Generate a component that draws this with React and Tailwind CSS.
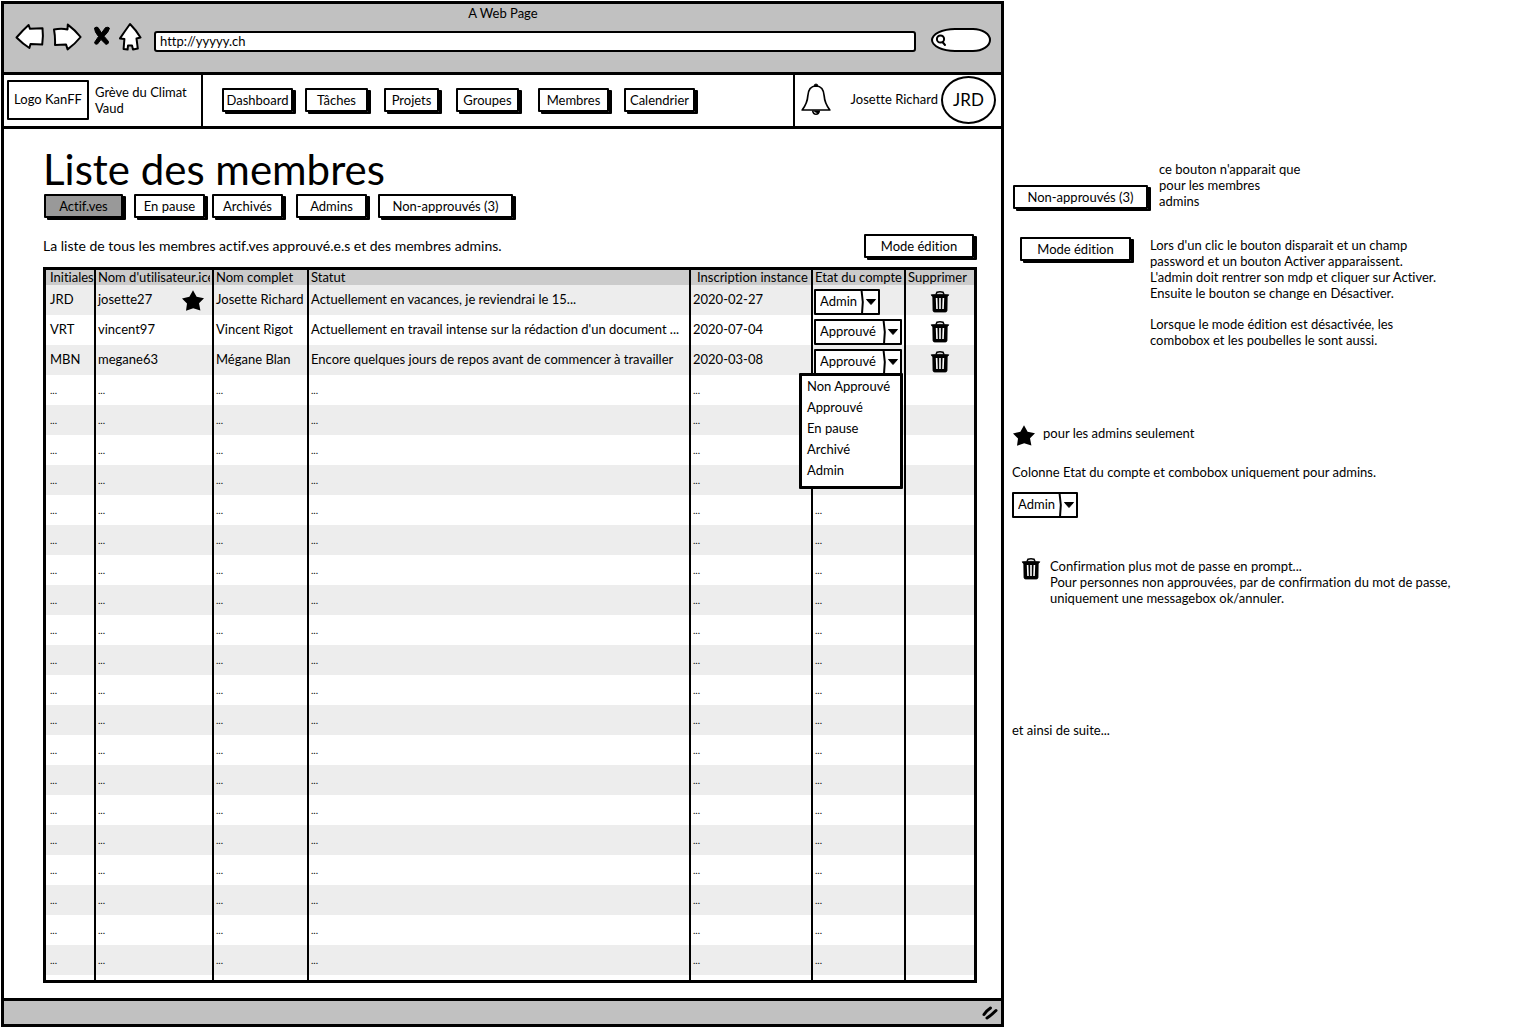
import React from "react";

function SketchButton({ children, className = "" }) {
  return (
    <button
      type="button"
      className={`h-6 shrink-0 whitespace-nowrap rounded-[1px] border-2 border-black text-center leading-5 shadow-[3px_2px_0_#000] ${className}`}
    >
      {children}
    </button>
  );
}

function Star() {
  return (
    <svg viewBox="0 0 22 21" className="h-[21px] w-[22px] shrink-0" aria-hidden="true">
      <path d="M11 0.3 L14.6 6.8 L22 8.2 L17 13.2 L18.4 20.6 L11.2 18.2 L4 20.8 L5 13.4 L0 8.4 L7.4 6.8 Z" fill="#000" />
    </svg>
  );
}

function Trash() {
  return (
    <svg viewBox="0 0 20 22" className="h-[22px] w-5 shrink-0" aria-hidden="true">
      <path d="M6 3.5 L7 1.2 Q10 0.4 13 1.2 L14 3.5" fill="none" stroke="#000" strokeWidth="1.5" />
      <path d="M1.2 3.8 Q10 2.8 18.8 3.8 L17.6 5.4 H17.2 L17 19.5 Q16.8 21 15.4 21 H4.6 Q3.2 21 3 19.5 L2.8 5.4 H2.2 Z" fill="#000" stroke="#000" strokeWidth="0.8" strokeLinejoin="round" />
      <path d="M6.6 7 L7 18 M10 7 V18 M13.4 7 L13 18" stroke="#fff" strokeWidth="1.6" />
    </svg>
  );
}

function Combo({ value, label, options, className }) {
  return (
    <div className={`relative h-[26px] shrink-0 ${className}`}>
      <select
        aria-label={label}
        defaultValue={value}
        className="block h-full w-full appearance-none rounded-[1px] border-2 border-black bg-white pb-[2px] pl-1 leading-5"
      >
        {options.map((o) => (
          <option key={o}>{o}</option>
        ))}
      </select>
      <svg viewBox="0 0 20 26" className="pointer-events-none absolute inset-y-0 right-0 h-full w-5" aria-hidden="true">
        <path d="M1.5 1 L2.8 13 L2 25" fill="none" stroke="#000" strokeWidth="2" />
        <path d="M6.5 10.5 H15.5 L11 15.5 Z" fill="#000" stroke="#000" strokeLinejoin="round" />
      </svg>
    </div>
  );
}

const states = ["Non Approuvé", "Approuvé", "En pause", "Archivé", "Admin"];

const members = [
  { id: "JRD", user: "josette27", star: true, name: "Josette Richard", status: "Actuellement en vacances, je reviendrai le 15...", date: "2020-02-27", state: "Admin" },
  { id: "VRT", user: "vincent97", name: "Vincent Rigot", status: "Actuellement en travail intense sur la rédaction d'un document ...", date: "2020-07-04", state: "Approuvé" },
  { id: "MBN", user: "megane63", name: "Mégane Blan", status: "Encore quelques jours de repos avant de commencer à travailler", date: "2020-03-08", state: "Approuvé", open: true },
];

const line = "border-r-2 border-black";

function Clip({ children, pad = "pl-[2px]" }) {
  return <div className={`mr-[2px] overflow-hidden whitespace-nowrap ${pad}`}>{children}</div>;
}

function BrowserBar() {
  return (
    <header className="border-b-[3px] border-black bg-[#c1c1c1] pb-5 pl-[11px] pr-[10px]">
      <div className="text-center leading-[18px]">A Web Page</div>
      <div className="flex items-end gap-2">
        <button type="button" aria-label="Précédent">
          <svg viewBox="0 0 30 30" className="h-[30px] w-[30px]" fill="#fff" stroke="#000" strokeWidth="2" strokeLinejoin="round">
            <path d="M1.5 15.5 Q8 8 13.6 3 L15 6.8 L27.5 6.2 Q28.5 14 27.2 22.6 L15.5 22 L14.4 26 Q8 22 1.5 15.5 Z" />
          </svg>
        </button>
        <button type="button" aria-label="Suivant">
          <svg viewBox="0 0 30 30" className="h-[30px] w-[30px]" fill="#fff" stroke="#000" strokeWidth="2" strokeLinejoin="round">
            <path d="M1 7.5 Q8 6.2 14.5 7.4 L14.8 2.6 Q22 8 27.6 15 Q22 22 14.6 27.4 L13 22.4 L2 23 Q2.4 15 1 7.5 Z" />
          </svg>
        </button>
        <button type="button" aria-label="Arrêter">
          <svg viewBox="0 0 20 30" className="h-[30px] w-5" fill="#000" stroke="#000" strokeWidth="1" strokeLinejoin="round">
            <path d="M3.5 6 Q5 4.5 7 5.5 L10.5 11 L14.5 5.6 Q17.5 4.5 18.5 6.2 Q17.5 10.5 13 14.2 L17.5 19.5 Q18 22 15 22.4 L10 17.5 L6.5 22 Q4 23 3.5 20.5 L7.5 14.5 Q3.5 10 3.5 6 Z" />
          </svg>
        </button>
        <button type="button" aria-label="Accueil">
          <svg viewBox="0 0 24 30" className="h-[30px] w-6" fill="#fff" stroke="#000" strokeWidth="2" strokeLinejoin="round">
            <path d="M11 2 Q17 8 21.5 15.5 L17.5 16.5 L18.8 26.6 L14 27.6 L13 23.5 H9 L8.6 27.6 L4.6 27 L5.4 17 L1 16.4 Q6 9 11 2 Z" />
          </svg>
        </button>
        <input
          type="text"
          aria-label="Adresse"
          defaultValue="http://yyyyy.ch"
          className="ml-[3px] h-[21px] min-w-0 flex-1 rounded-[3px] border-2 border-black bg-white px-1 pb-[2px] leading-4"
        />
        <label className="ml-[7px] flex h-6 w-[60px] items-center border-2 border-black bg-white pl-[2px] [border-radius:24px_18px_18px_24px/12px]">
          <svg viewBox="0 0 12 13" className="h-[13px] w-3 shrink-0" fill="none" stroke="#000" strokeWidth="2" strokeLinecap="round">
            <circle cx="5.5" cy="5" r="3.6" />
            <path d="M7.5 8 L10 11" />
          </svg>
          <input type="search" aria-label="Rechercher" className="w-8 min-w-0 bg-transparent outline-none" />
        </label>
      </div>
    </header>
  );
}

function TopNav() {
  return (
    <div className="flex h-[54px] border-b-[3px] border-black">
      <div className="flex w-[199px] shrink-0 items-center border-r-2 border-black pb-px pl-[3px]">
        <div className="flex h-10 w-[82px] items-center justify-center whitespace-nowrap rounded-[1px] border-2 border-black">Logo KanFF</div>
        <div className="ml-[6px] leading-4">
          Grève du Climat
          <br />
          Vaud
        </div>
      </div>
      <nav className="grid flex-1 grid-cols-[83px_79px_72px_82px_86px_auto] content-center justify-start pb-px pl-[19px]">
        <SketchButton className="w-[71px]">Dashboard</SketchButton>
        <SketchButton className="w-[63px]">Tâches</SketchButton>
        <SketchButton className="w-[55px]">Projets</SketchButton>
        <SketchButton className="w-[63px]">Groupes</SketchButton>
        <SketchButton className="w-[71px]">Membres</SketchButton>
        <SketchButton className="w-[71px]">Calendrier</SketchButton>
      </nav>
      <div className="flex w-[208px] shrink-0 items-center border-l-2 border-black pb-px pl-[6px] pr-[5px]">
        <svg viewBox="0 0 30 34" className="h-[34px] w-[30px] shrink-0" role="img" aria-label="Notifications">
          <path d="M15 3 Q7.5 3 6.8 13 Q6.4 20 1.2 27 H28.8 Q23.6 20 23.2 13 Q22.5 3 15 3 Z" fill="#fff" stroke="#000" strokeWidth="1.7" strokeLinejoin="round" />
          <path d="M13 3.5 Q13 1 15 1 Q17 1 17 3.5 Z" fill="#000" stroke="#000" />
          <path d="M10.8 27.5 Q11.5 32 15 32 Q18.5 32 19.2 27.5 Z" fill="#000" />
          <path d="M13 28.5 Q13.5 30.4 15.5 30.2" fill="none" stroke="#fff" />
        </svg>
        <span className="flex-1 whitespace-nowrap pr-[3px] text-right">Josette Richard</span>
        <div className="flex h-12 w-[55px] shrink-0 items-center justify-center rounded-[50%] border-2 border-black text-[17px]">JRD</div>
      </div>
    </div>
  );
}

function MembersTable() {
  return (
    <div className="mt-[9px] border-[3px] border-black">
      <table className="w-full table-fixed border-separate border-spacing-0 text-left">
        <colgroup>
          <col className="w-[50px]" />
          <col className="w-[118px]" />
          <col className="w-[95px]" />
          <col />
          <col className="w-[122px]" />
          <col className="w-[93px]" />
          <col className="w-[68px]" />
        </colgroup>
        <thead>
          <tr className="bg-[#cbcbcb] leading-[15px] [&_th]:h-[15px] [&_th]:p-0 [&_th]:font-normal">
            <th className={line}><div className="overflow-hidden whitespace-nowrap pl-1">Initiales</div></th>
            <th className={line}><Clip>Nom d'utilisateur.ice</Clip></th>
            <th className={line}><Clip>Nom complet</Clip></th>
            <th className={line}><Clip>Statut</Clip></th>
            <th className={line}><Clip pad="pl-[6px]">Inscription instance</Clip></th>
            <th className={line}><Clip>Etat du compte</Clip></th>
            <th><Clip>Supprimer</Clip></th>
          </tr>
        </thead>
        <tbody className="[&_td]:p-0">
          {members.map((m) => (
            <tr key={m.id} className="h-[30px] odd:bg-[#ededed]">
              <td className={line}><Clip pad="pl-1">{m.id}</Clip></td>
              <td className={line}>
                <div className="flex items-center justify-between pl-[2px] pr-2">
                  {m.user}
                  {m.star && <Star />}
                </div>
              </td>
              <td className={line}><Clip>{m.name}</Clip></td>
              <td className={line}><Clip>{m.status}</Clip></td>
              <td className={line}><Clip>{m.date}</Clip></td>
              <td className={line}>
                <div className="relative flex h-[30px] items-end pl-px">
                  <Combo
                    value={m.state}
                    label={`Etat du compte de ${m.name}`}
                    options={states}
                    className={m.state === "Admin" ? "w-[66px]" : "w-[88px]"}
                  />
                  {m.open && (
                    <ul role="listbox" aria-label="Etats" className="absolute left-[-14px] top-7 z-10 w-[104px] rounded-[1px] border-[3px] border-black bg-white pb-[5px]">
                      {states.map((s) => (
                        <li key={s} role="option" aria-selected={s === m.state} className="whitespace-nowrap pl-[5px] leading-[21px]">
                          {s}
                        </li>
                      ))}
                    </ul>
                  )}
                </div>
              </td>
              <td>
                <div className="flex h-[30px] items-end justify-center pb-[2px]">
                  <button type="button" aria-label={`Supprimer ${m.name}`}><Trash /></button>
                </div>
              </td>
            </tr>
          ))}
          {Array.from({ length: 20 }, (_, i) => (
            <tr key={i} className="h-[30px] text-[10px] even:bg-white odd:bg-[#ededed]">
              <td className={line}><Clip pad="pl-1">...</Clip></td>
              <td className={line}><Clip>...</Clip></td>
              <td className={line}><Clip>...</Clip></td>
              <td className={line}><Clip>...</Clip></td>
              <td className={line}><Clip>...</Clip></td>
              <td className={line}>{i > 3 && <Clip>...</Clip>}</td>
              <td />
            </tr>
          ))}
        </tbody>
        <tfoot aria-hidden="true">
          <tr className="[&_td]:h-[5px] [&_td]:p-0">
            <td className={line} />
            <td className={line} />
            <td className={line} />
            <td className={line} />
            <td className={line} />
            <td className={line} />
            <td />
          </tr>
        </tfoot>
      </table>
    </div>
  );
}

function Notes() {
  return (
    <aside className="flex flex-col items-start pl-2 pt-[161px] leading-4">
      <div className="flex items-end">
        <SketchButton className="ml-px w-[135px]">Non-approuvés (3)</SketchButton>
        <p className="ml-[11px]">
          ce bouton n'apparait que
          <br />
          pour les membres
          <br />
          admins
        </p>
      </div>
      <div className="mt-7 flex items-start pl-2">
        <SketchButton className="w-[111px]">Mode édition</SketchButton>
        <div className="ml-[19px] whitespace-nowrap">
          <p>
            Lors d'un clic le bouton disparait et un champ
            <br />
            password et un bouton Activer apparaissent.
            <br />
            L'admin doit rentrer son mdp et cliquer sur Activer.
            <br />
            Ensuite le bouton se change en Désactiver.
          </p>
          <p className="mt-[15px]">
            Lorsque le mode édition est désactivée, les
            <br />
            combobox et les poubelles le sont aussi.
          </p>
        </div>
      </div>
      <div className="mt-[77px] flex gap-2 pl-px">
        <Star />
        <p>pour les admins seulement</p>
      </div>
      <p className="mt-[18px]">Colonne Etat du compte et combobox uniquement pour admins.</p>
      <div className="mt-3">
        <Combo value="Admin" label="Etat du compte" options={states} className="w-[66px]" />
      </div>
      <div className="mt-10 flex gap-[9px] pl-[9px]">
        <Trash />
        <p className="whitespace-nowrap">
          Confirmation plus mot de passe en prompt...
          <br />
          Pour personnes non approuvées, par de confirmation du mot de passe,
          <br />
          uniquement une messagebox ok/annuler.
        </p>
      </div>
      <p className="mt-[116px]">et ainsi de suite...</p>
    </aside>
  );
}

export default function App() {
  return (
    <div className="grid min-h-screen grid-cols-[1004fr_529fr] items-start bg-white font-['Lato',sans-serif] text-[13px] text-black [font-variant-ligatures:none]">
      <div className="m-px mr-0 border-[3px] border-black">
        <BrowserBar />
        <TopNav />
        <main className="pb-[15px] pl-[39px] pr-6 pt-4">
          <h1 className="text-[42px] leading-[49px]">Liste des membres</h1>
          <div className="grid grid-cols-[90px_78px_84px_82px_auto] justify-start pl-px">
            <SketchButton className="w-[79px] bg-[#999]">Actif.ves</SketchButton>
            <SketchButton className="w-[71px]">En pause</SketchButton>
            <SketchButton className="w-[71px]">Archivés</SketchButton>
            <SketchButton className="w-[71px]">Admins</SketchButton>
            <SketchButton className="w-[135px]">Non-approuvés (3)</SketchButton>
          </div>
          <div className="mt-4 flex items-center justify-between pr-[3px]">
            <p className="text-sm">La liste de tous les membres actif.ves approuvé.e.s et des membres admins.</p>
            <SketchButton className="w-[110px]">Mode édition</SketchButton>
          </div>
          <MembersTable />
        </main>
        <footer className="flex h-[26px] items-center justify-end border-t-[3px] border-black bg-[#c1c1c1] pr-[2px]">
          <svg viewBox="0 0 18 16" className="h-4 w-[18px]" fill="none" stroke="#000" strokeWidth="3" strokeLinecap="round" aria-hidden="true">
            <path d="M3 9.5 Q5 6 9.5 3 M6 13 Q10 10.5 15 5.5" />
          </svg>
        </footer>
      </div>
      <Notes />
    </div>
  );
}
